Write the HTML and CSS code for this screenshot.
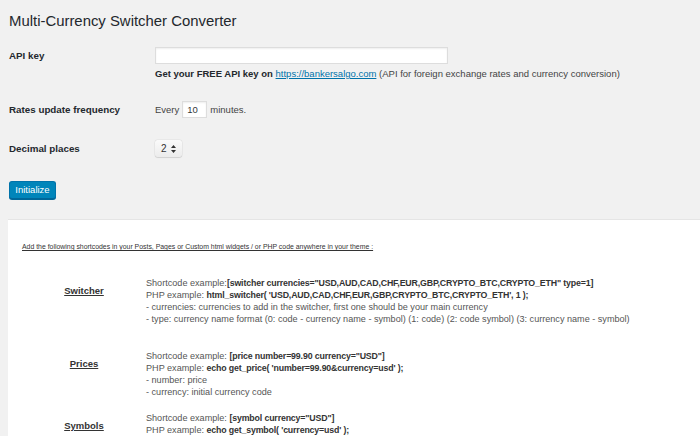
FILE: index.html
```html
<!DOCTYPE html>
<html>
<head>
<meta charset="utf-8">
<link rel="stylesheet" href="styles.css">
</head>
<body>
<div class="wrap">
  <h1 class="title">Multi-Currency Switcher Converter</h1>
  <div class="row row-api">
    <div class="label">API key</div>
    <div class="field"><input class="text-input api-input" type="text" value=""></div>
  </div>
  <p class="desc"><b>Get your FREE API key on</b> <a href="#">https://bankersalgo.com</a> (API for foreign exchange rates and currency conversion)</p>
  <div class="row row-rates">
    <div class="label">Rates update frequency</div>
    <div class="field">Every <input class="text-input small-input" type="text" value="10"> minutes.</div>
  </div>
  <div class="row row-decimal">
    <div class="label">Decimal places</div>
    <div class="field">
      <span class="select">2
        <svg class="arrows" width="5" height="8" viewBox="0 0 5 8"><path d="M2.5 0 L5 3 H0 Z M2.5 8 L5 5 H0 Z" fill="#333"/></svg>
      </span>
    </div>
  </div>
  <button class="btn">Initialize</button>
</div>
<div class="panel">
  <p class="intro">Add the following shortcodes in your Posts, Pages or Custom html widgets / or PHP code anywhere in your theme :</p>
  <div class="sc sc-switcher">
    <div class="sc-label">Switcher</div>
    <div class="sc-body">
      <div>Shortcode example:<b>[switcher currencies="USD,AUD,CAD,CHF,EUR,GBP,CRYPTO_BTC,CRYPTO_ETH" type=1]</b></div>
      <div>PHP example: <b>html_switcher( 'USD,AUD,CAD,CHF,EUR,GBP,CRYPTO_BTC,CRYPTO_ETH', 1 );</b></div>
      <div>- currencies: currencies to add in the switcher, first one should be your main currency</div>
      <div>- type: currency name format (0: code - currency name - symbol) (1: code) (2: code symbol) (3: currency name - symbol)</div>
    </div>
  </div>
  <div class="sc sc-prices">
    <div class="sc-label">Prices</div>
    <div class="sc-body">
      <div>Shortcode example: <b>[price number=99.90 currency="USD"]</b></div>
      <div>PHP example: <b>echo get_price( 'number=99.90&amp;currency=usd' );</b></div>
      <div>- number: price</div>
      <div>- currency: initial currency code</div>
    </div>
  </div>
  <div class="sc sc-symbols">
    <div class="sc-label">Symbols</div>
    <div class="sc-body">
      <div>Shortcode example: <b>[symbol currency="USD"]</b></div>
      <div>PHP example: <b>echo get_symbol( 'currency=usd' );</b></div>
    </div>
  </div>
</div>
</body>
</html>
```
FILE: styles.css
```css
html, body {
  margin: 0;
  padding: 0;
  background: #f1f1f1;
  font-family: "Liberation Sans", Arial, sans-serif;
  color: #23282d;
  overflow: hidden;
  height: 436px;
}
.wrap {
  padding-left: 9px;
}
.title {
  margin: 0;
  padding-top: 11px;
  font-size: 14.9px;
  line-height: 20px;
  font-weight: 400;
  color: #23282d;
}
.row {
  display: flex;
  align-items: center;
}
.label {
  width: 146px;
  font-size: 9.8px;
  font-weight: 700;
  line-height: 12px;
}
.field {
  font-size: 9.5px;
  line-height: 12px;
  color: #444;
  display: flex;
  align-items: center;
}
.row-api { margin-top: 16px; }
.row-rates { margin-top: 21px; }
.row-decimal { margin-top: 22px; }
.text-input {
  box-sizing: border-box;
  height: 17px;
  border: 1px solid #ddd;
  background: #fff;
  box-shadow: inset 0 1px 2px rgba(0,0,0,0.07);
  font-family: "Liberation Sans", Arial, sans-serif;
  font-size: 9.5px;
  color: #32373c;
  padding: 0 4px;
  margin: 0;
  outline: none;
}
.api-input { width: 293px; }
.small-input { width: 25px; margin: 0 3px 0 3px; }
.desc {
  margin: 4px 0 0 146px;
  font-size: 9.5px;
  line-height: 12px;
  color: #444;
}
.desc b { color: #23282d; }
.desc a {
  color: #0073aa;
  text-decoration: underline;
}
.select {
  box-sizing: border-box;
  width: 27px;
  height: 17px;
  display: inline-flex;
  align-items: center;
  justify-content: space-between;
  padding: 0 6px 0 6px;
  border-radius: 3px;
  background: linear-gradient(#fafafa, #ececec);
  box-shadow: 0 0 1px rgba(0,0,0,0.35), 0 1px 1px rgba(0,0,0,0.1);
  font-size: 10px;
  color: #333;
}
.btn {
  display: block;
  margin-top: 24px;
  box-sizing: border-box;
  width: 47px;
  height: 18px;
  padding: 0;
  background: #0085ba;
  border: 1px solid #0073aa;
  border-bottom-color: #006799;
  border-radius: 3px;
  box-shadow: 0 1px 0 #006799;
  color: #fff;
  font-family: "Liberation Sans", Arial, sans-serif;
  font-size: 9.5px;
  line-height: 16px;
}
.panel {
  margin: 20px 0 0 8px;
  background: #fff;
  border-top: 1px solid #e5e5e5;
  padding: 22px 0 0 14px;
  height: 194px;
  overflow: hidden;
}
.intro {
  margin: 0;
  font-size: 6.9px;
  line-height: 10px;
  color: #333;
  text-decoration: underline;
}
.sc {
  display: flex;
  align-items: flex-start;
}
.sc-switcher { margin-top: 25px; }
.sc-prices { margin-top: 25px; }
.sc-symbols { margin-top: 14px; }
.sc-label {
  width: 124px;
  text-align: center;
  padding-top: 8px;
  font-size: 9.5px;
  line-height: 12px;
  font-weight: 700;
  color: #333;
  text-decoration: underline;
}
.sc-body {
  font-size: 9.1px;
  line-height: 12px;
  color: #555;
  white-space: nowrap;
}
.sc-body b {
  color: #333;
  font-size: 8.8px;
  letter-spacing: -0.15px;
}
```
